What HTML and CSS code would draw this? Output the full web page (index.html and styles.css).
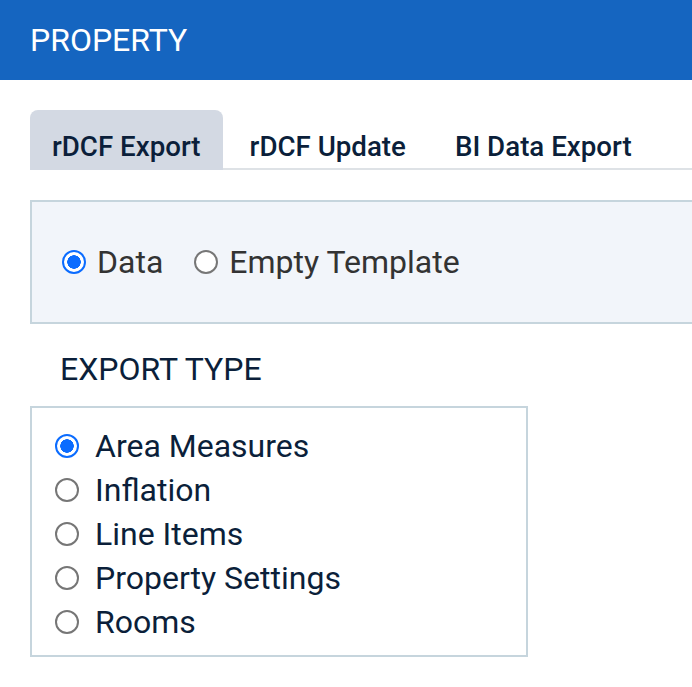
FILE: index.html
```html
<!DOCTYPE html>
<html lang="en">
<head>
    <meta charset="UTF-8">
    <meta name="viewport" content="width=device-width, initial-scale=1.0">
    <title>Property</title>
    <link rel="stylesheet" href="styles.css">
</head>
<body>
  <div class="header">
    <h1 class="header-title">PROPERTY</h1>
  </div>

  <div class="content">
    <div class="tabs">
      <button class="tab active">rDCF Export</button>
      <button class="tab">rDCF Update</button>
      <button class="tab">BI Data Export</button>
    </div>

    <div class="panel">
      <label class="radio-item light"><input type="radio" name="mode" checked> Data</label>
      <label class="radio-item light"><input type="radio" name="mode"> Empty Template</label>
    </div>

    <h2 class="section-title">EXPORT TYPE</h2>

    <div class="type-box">
      <label class="radio-item"><input type="radio" name="type" checked> Area Measures</label>
      <label class="radio-item"><input type="radio" name="type"> Inflation</label>
      <label class="radio-item"><input type="radio" name="type"> Line Items</label>
      <label class="radio-item"><input type="radio" name="type"> Property Settings</label>
      <label class="radio-item"><input type="radio" name="type"> Rooms</label>
    </div>
  </div>
</body>
</html>
```

FILE: styles.css
```css
body {
  margin: 0;
  padding: 0;
  font-family: Roboto, 'Liberation Sans', sans-serif;
  background-color: #fff;
  color: #0b1f3a;
}

.header {
  background-color: #1565c0;
  height: 80px;
  display: flex;
  align-items: center;
  padding-left: 30px;
}

.header-title {
  margin: 0;
  font-size: 32px;
  font-weight: 400;
  color: #fff;
}

.content {
  padding-left: 30px;
  padding-top: 30px;
}

.tabs {
  display: flex;
  gap: 5px;
  border-bottom: 2px solid #dee2e6;
}

.tab {
  background: transparent;
  border: none;
  height: 60px;
  padding: 12px 22px 0;
  margin-bottom: -2px;
  font-family: inherit;
  font-size: 27.7px;
  font-weight: 500;
  color: #0b1f3a;
  border-radius: 8px 8px 0 0;
  cursor: pointer;
}

.tab.active {
  background-color: #d3d9e3;
}

/* panel runs off the right edge, so no right border */
.panel {
  margin-top: 30px;
  height: 124px;
  box-sizing: border-box;
  background-color: #f2f5fa;
  border: 2px solid #c6d5dd;
  border-right: none;
  display: flex;
  align-items: center;
  gap: 31px;
  padding-left: 30px;
}

.radio-item {
  display: flex;
  align-items: center;
  gap: 16px;
  font-size: 32px;
  height: 44px;
  color: #0b1f3a;
}

.radio-item.light {
  color: #333;
  gap: 11px;
}

.radio-item input {
  appearance: none;
  -webkit-appearance: none;
  margin: 0;
  width: 24px;
  height: 24px;
  border: 2px solid #767676;
  border-radius: 50%;
  background: #fff;
  box-sizing: border-box;
}

.radio-item input:checked {
  border-color: #0b6cff;
  background: radial-gradient(circle, #0b6cff 0 6.5px, #fff 7px);
}

.section-title {
  margin: 26px 0 0 30px;
  font-size: 32px;
  font-weight: 400;
  line-height: 38px;
}

.type-box {
  margin-top: 18px;
  width: 498px;
  box-sizing: border-box;
  border: 2px solid #c6d5dd;
  padding: 16px 23px 11px;
}
```
